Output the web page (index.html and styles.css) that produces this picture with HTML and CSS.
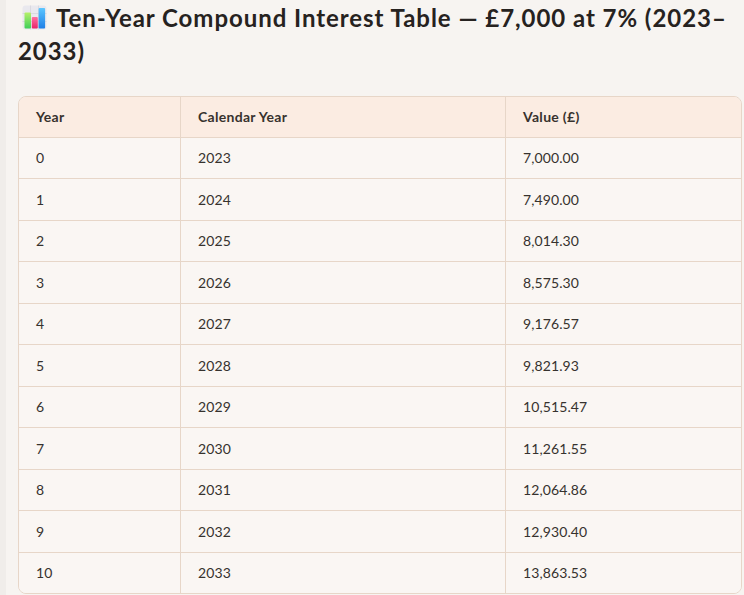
FILE: index.html
```html
<!DOCTYPE html>
<html lang="en">
<head>
<meta charset="utf-8">
<link rel="stylesheet" href="styles.css">
</head>
<body>
<main class="page">
  <h2 class="title"><svg class="chart-icon" width="25" height="25" viewBox="0 0 25 25" aria-hidden="true">
      <defs>
        <linearGradient id="g1" x1="0" y1="0" x2="0" y2="1"><stop offset="0" stop-color="#b6f06a"/><stop offset="1" stop-color="#3fcf5a"/></linearGradient>
        <linearGradient id="g2" x1="0" y1="0" x2="0" y2="1"><stop offset="0" stop-color="#ff6fa0"/><stop offset="1" stop-color="#e8246a"/></linearGradient>
        <linearGradient id="g3" x1="0" y1="0" x2="0" y2="1"><stop offset="0" stop-color="#5cc6ff"/><stop offset="1" stop-color="#1f7fe6"/></linearGradient>
      </defs>
      <rect x="0.5" y="0.5" width="24" height="24" rx="3" fill="#e9e8ee"/>
      <path d="M0.5 8.5h24M0.5 16.5h24M8.5 0.5v24M16.5 0.5v24" stroke="#d6d4dc" stroke-width="0.8" fill="none"/>
      <rect x="2.5" y="7.5" width="6.5" height="16" rx="1" fill="url(#g1)"/>
      <rect x="9.8" y="12" width="6" height="11.5" rx="1" fill="url(#g2)"/>
      <rect x="16.6" y="3" width="6.5" height="20.5" rx="1" fill="url(#g3)"/>
    </svg> Ten-Year Compound Interest Table — £7,000 at 7% (2023–2033)</h2>
  <div class="table-wrap">
    <table class="data">
      <thead>
        <tr><th class="c1">Year</th><th class="c2">Calendar Year</th><th class="c3">Value (£)</th></tr>
      </thead>
      <tbody>
        <tr><td>0</td><td>2023</td><td>7,000.00</td></tr>
        <tr><td>1</td><td>2024</td><td>7,490.00</td></tr>
        <tr><td>2</td><td>2025</td><td>8,014.30</td></tr>
        <tr><td>3</td><td>2026</td><td>8,575.30</td></tr>
        <tr><td>4</td><td>2027</td><td>9,176.57</td></tr>
        <tr><td>5</td><td>2028</td><td>9,821.93</td></tr>
        <tr><td>6</td><td>2029</td><td>10,515.47</td></tr>
        <tr><td>7</td><td>2030</td><td>11,261.55</td></tr>
        <tr><td>8</td><td>2031</td><td>12,064.86</td></tr>
        <tr><td>9</td><td>2032</td><td>12,930.40</td></tr>
        <tr><td>10</td><td>2033</td><td>13,863.53</td></tr>
      </tbody>
    </table>
  </div>
</main>
</body>
</html>
```
FILE: styles.css
```css
html, body {
  margin: 0;
  padding: 0;
}
body {
  background: #f7f4f1;
  border-left: 6px solid #f0edea;
  min-height: 595px;
  box-sizing: border-box;
  font-family: Lato, "Noto Sans", sans-serif;
  color: #3a3632;
  overflow: hidden;
}
.page {
  padding: 1px 0 0 12px;
}
.title {
  margin: 0 0 29px 0;
  max-width: 712px;
  font-size: 24px;
  line-height: 33px;
  font-weight: 700;
  letter-spacing: 0.95px;
  color: #262220;
}
.chart-icon {
  vertical-align: -3px;
  margin-left: 4px;
  margin-right: 3px;
}
.table-wrap {
  width: 724px;
  border: 1px solid #e7d6c8;
  border-radius: 8px;
  overflow: hidden;
  box-sizing: border-box;
}
.data {
  width: 100%;
  border-collapse: collapse;
  font-size: 14px;
  table-layout: fixed;
}
.data th, .data td {
  text-align: left;
  padding: 11.5px 17px;
  line-height: 17.5px;
  border-left: 1px solid #e7d6c8;
}
.data th:first-child, .data td:first-child {
  border-left: none;
}
.data th {
  background: #fbece2;
  font-weight: 700;
  color: #37322e;
  letter-spacing: 0.3px;
  padding-top: 11px;
  padding-bottom: 11px;
}
.data td {
  background: #faf6f3;
  border-top: 1px solid #e7d6c8;
  color: #36322e;
  letter-spacing: 0.1px;
}
.c1 { width: 127px; }
.c2 { width: 290px; }
```
